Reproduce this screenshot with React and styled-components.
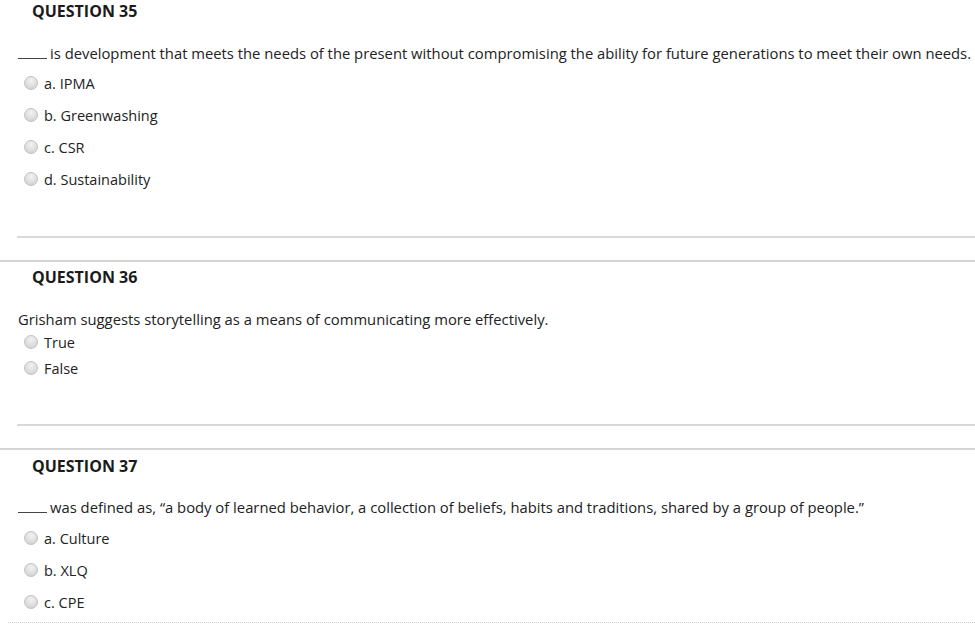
import React from "react";
import styled, { createGlobalStyle } from "styled-components";

const Global = createGlobalStyle`
  html, body { margin: 0; padding: 0; background: #fff; }
  body { font-family: "Open Sans", "Liberation Sans", Arial, sans-serif; color: #222; }
`;

const Page = styled.div`
  width: 975px;
  height: 625px;
  overflow: hidden;
  display: flex;
  flex-direction: column;
`;

const Section = styled.section`
  display: flex;
  flex-direction: column;
`;

const Heading = styled.h3`
  margin: ${(p) => p.$top || 0}px 0 0 0;
  padding-left: 32px;
  height: 24px;
  line-height: 22px;
  font-size: 16px;
  font-weight: 700;
  color: #1b1b1b;
`;

const Prompt = styled.p`
  margin: ${(p) => p.$gap}px 0 0 0;
  padding-left: 18px;
  height: 20px;
  line-height: 20px;
  font-size: 14.8px;
  color: #222;
  white-space: nowrap;
`;

const Blank = styled.span`
  display: inline-block;
  width: 29px;
  height: 13px;
  border-bottom: 1px solid #444;
  margin-right: 3px;
  vertical-align: baseline;
`;

const Options = styled.ul`
  list-style: none;
  margin: ${(p) => p.$gap}px 0 0 0;
  padding: 0 0 0 24px;
`;

const Option = styled.li`
  display: flex;
  align-items: center;
  gap: 6px;
  height: ${(p) => p.$h}px;
  font-size: 14.5px;
  color: #222;
`;

const Radio = styled.span`
  width: 14px;
  height: 14px;
  border-radius: 50%;
  border: 1px solid #c2c2c2;
  background: radial-gradient(circle at 50% 30%, #f2f2f2 0%, #dedede 55%, #cdcdcd 100%);
  box-sizing: border-box;
  flex: none;
`;

const InsetRule = styled.hr`
  margin: ${(p) => p.$top}px 0 0 17px;
  border: 0;
  height: 2px;
  background: #d9d9d9;
`;

const FullRule = styled.hr`
  margin: 22px 0 0 0;
  border: 0;
  height: 2px;
  background: #d4d4d4;
`;

const DottedRule = styled.hr`
  margin: 4px 0 0 8px;
  border: 0;
  border-top: 1px dotted #d0d0d0;
`;

const questions = [
  {
    title: "QUESTION 35",
    top: 0,
    promptGap: 19,
    blank: true,
    prompt:
      "is development that meets the needs of the present without compromising the ability for future generations to meet their own needs.",
    optGap: 4,
    rowH: 32,
    options: ["a. IPMA", "b. Greenwashing", "c. CSR", "d. Sustainability"],
    ruleTop: 41,
  },
  {
    title: "QUESTION 36",
    top: 4,
    promptGap: 19,
    prompt: "Grisham suggests storytelling as a means of communicating more effectively.",
    optGap: 0,
    rowH: 26,
    options: ["True", "False"],
    ruleTop: 43,
  },
  {
    title: "QUESTION 37",
    top: 5,
    promptGap: 18,
    blank: true,
    prompt:
      "was defined as, \u201ca body of learned behavior, a collection of beliefs, habits and traditions, shared by a group of people.\u201d",
    optGap: 5,
    rowH: 32,
    options: ["a. Culture", "b. XLQ", "c. CPE"],
  },
];

export default function App() {
  return (
    <Page>
      <Global />
      {questions.map((q) => (
        <Section key={q.title}>
          <Heading $top={q.top}>{q.title}</Heading>
          <Prompt $gap={q.promptGap}>
            {q.blank && <Blank />}
            {q.prompt}
          </Prompt>
          <Options $gap={q.optGap}>
            {q.options.map((o) => (
              <Option key={o} $h={q.rowH}>
                <Radio />
                {o}
              </Option>
            ))}
          </Options>
          {q.ruleTop ? (
            <>
              <InsetRule $top={q.ruleTop} />
              <FullRule />
            </>
          ) : (
            <DottedRule />
          )}
        </Section>
      ))}
    </Page>
  );
}
